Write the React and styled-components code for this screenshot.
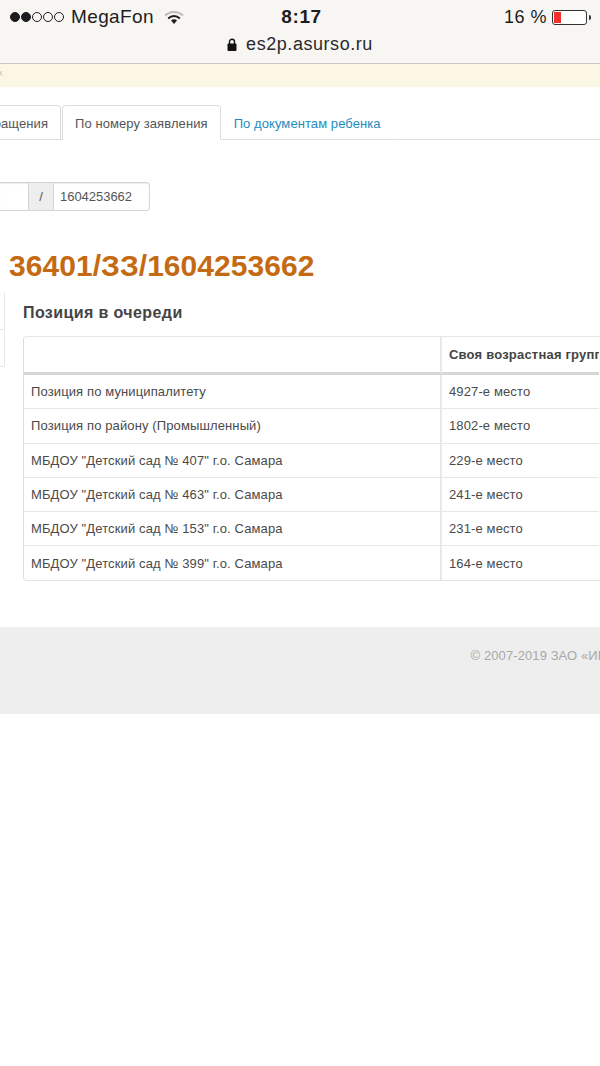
import React from "react";
import styled, { createGlobalStyle } from "styled-components";

const GlobalStyle = createGlobalStyle`
  html, body {
    margin: 0;
    padding: 0;
    background: #fff;
  }
  body {
    width: 600px;
    height: 1066px;
    overflow: hidden;
    font-family: "Liberation Sans", Arial, sans-serif;
    color: #444;
  }
`;

const Screen = styled.div`
  width: 600px;
  height: 1066px;
  overflow: hidden;
  background: #fff;
`;

const BrowserBar = styled.header`
  height: 64px;
  box-sizing: border-box;
  padding: 5px 0 0;
  background: #f7f6f3;
  border-bottom: 1px solid #c6c6c4;
  color: #1d1d1f;
`;

const StatusRow = styled.div`
  display: grid;
  grid-template-columns: 1fr auto 1fr;
  align-items: center;
  height: 24px;
  padding: 0 9px 0 10px;
`;

const Carrier = styled.div`
  display: flex;
  align-items: center;
  font-size: 19px;
  letter-spacing: 0.37px;
`;

const Signal = styled.span`
  display: flex;
  gap: 1px;
  margin-right: 7px;
`;

const Dot = styled.i`
  width: 10px;
  height: 10px;
  box-sizing: border-box;
  border-radius: 50%;
  border: 1px solid #1d1d1f;
  background: ${(p) => (p.$on ? "#1d1d1f" : "transparent")};
`;

const Wifi = styled.svg`
  width: 20px;
  height: 15px;
  margin-left: 10px;
`;

const Clock = styled.div`
  margin-left: 2px;
  font-size: 19px;
  font-weight: 700;
  letter-spacing: 0.6px;
`;

const Battery = styled.div`
  display: flex;
  align-items: center;
  justify-content: flex-end;
  font-size: 18px;
  letter-spacing: 0.5px;
`;

const BatteryBody = styled.span`
  width: 35px;
  height: 15px;
  box-sizing: border-box;
  margin-left: 5px;
  padding: 1px;
  border: 1px solid #333;
  border-radius: 3px;
  background: #fff;
`;

const BatteryFill = styled.span`
  display: block;
  width: 7px;
  height: 100%;
  background: #f4302c;
`;

const BatteryTip = styled.span`
  width: 2px;
  height: 5px;
  margin-left: 2px;
  background: #333;
  border-radius: 0 2px 2px 0;
`;

const UrlRow = styled.div`
  display: flex;
  align-items: center;
  justify-content: center;
  height: 24px;
  margin-top: 3px;
  font-size: 18px;
  letter-spacing: 0.55px;
  color: #2a2a2c;
`;

const Lock = styled.svg`
  width: 10px;
  height: 13px;
  margin-right: 9px;
`;

const Alert = styled.div`
  height: 23px;
  background: #fcf6e5;
  color: #cdbb98;
  font-size: 10px;
  line-height: 20px;
  overflow: hidden;
`;

const AlertText = styled.span`
  display: block;
  margin-left: -3px;
`;

const TabStrip = styled.nav`
  display: flex;
  align-items: flex-end;
  height: 53px;
  box-sizing: border-box;
  border-bottom: 1px solid #ddd;
`;

const Tab = styled.a`
  display: block;
  box-sizing: border-box;
  height: 35px;
  margin-bottom: -1px;
  padding: 9px 12px 0;
  font-size: 13px;
  line-height: 18px;
  letter-spacing: 0.08px;
  white-space: nowrap;
  color: ${(p) => (p.$link ? "#1d8cc0" : "#555")};
  background: #fff;
  border: 1px solid ${(p) => (p.$link ? "transparent" : "#ddd")};
  border-bottom-color: ${(p) => (p.$link ? "#ddd" : "#fff")};
  border-radius: 4px 4px 0 0;
`;

const ClippedTab = styled(Tab)`
  margin-left: -13px;
  margin-right: 1px;
  padding-left: 0;
  padding-right: 12px;
  width: 74px;
  text-align: right;
  border-bottom-color: #ddd;
  border-left: 0;
`;

const SearchGroup = styled.div`
  display: flex;
  width: 150px;
  height: 29px;
  box-sizing: border-box;
  margin-top: 42px;
  border: 1px solid #d4d4d4;
  border-left: 0;
  border-radius: 0 4px 4px 0;
  box-shadow: inset 0 1px 1px rgba(0, 0, 0, 0.08);
  font-size: 13px;
  line-height: 28px;
  color: #555;
`;

const SearchBlank = styled.span`
  width: 28px;
  border-right: 1px solid #d4d4d4;
`;

const SearchSlash = styled.span`
  width: 24px;
  text-align: center;
  background: #eee;
  border-right: 1px solid #d4d4d4;
`;

const SearchValue = styled.span`
  padding-left: 6px;
  font-size: 13px;
  letter-spacing: -0.03px;
`;

const Title = styled.h1`
  margin: 37px 0 0 9px;
  font-size: 30px;
  line-height: 36px;
  font-weight: 700;
  letter-spacing: 0.05px;
  color: #c46a12;
`;

const Columns = styled.div`
  display: flex;
  margin-top: 9px;
`;

const SideNav = styled.aside`
  width: 5px;
  flex: none;
`;

const SideItem = styled.div`
  height: 37px;
  box-sizing: border-box;
  border-right: 1px solid #e8e8e8;
  border-bottom: 1px solid #e8e8e8;
`;

const Main = styled.section`
  margin-left: 18px;
  flex: 1;
  min-width: 0;
`;

const Heading = styled.h2`
  margin: 10px 0 0;
  font-size: 16px;
  line-height: 19px;
  font-weight: 700;
  letter-spacing: 0.4px;
  color: #444;
`;

const Table = styled.table`
  display: block;
  width: 577px;
  margin-top: 14px;
  border-collapse: separate;
  border-spacing: 0;
  font-size: 13px;
  letter-spacing: 0.12px;
  color: #4a4a4a;
  border-top: 1px solid #e6e6e6;
  border-left: 1px solid #ddd;
  border-bottom: 1px solid #e4e4e4;
  border-radius: 4px 0 0 4px;
`;

const HeadCell = styled.th`
  height: 35px;
  padding: 0 0 0 7px;
  text-align: left;
  font-size: 13px;
  font-weight: 700;
  letter-spacing: 0.2px;
  color: #444;
  white-space: nowrap;
  border-bottom: 3px solid #d6d6d6;
  border-right: ${(p) => (p.$first ? "2px solid #e8e8e8" : "0")};
  min-width: ${(p) => (p.$first ? "409px" : "150px")};
  max-width: ${(p) => (p.$first ? "409px" : "150px")};
  overflow: hidden;
  box-sizing: content-box;
`;

const Cell = styled.td`
  height: 33.3px;
  padding: 0 0 0 7px;
  white-space: nowrap;
  border-top: ${(p) => (p.$top ? "0" : "1px solid #e6e6e6")};
  border-right: ${(p) => (p.$first ? "2px solid #e8e8e8" : "0")};
`;

const Footer = styled.footer`
  height: 87px;
  box-sizing: border-box;
  margin-top: 46px;
  padding: 21px 0 0 470.5px;
  background: #eeeeee;
  font-size: 13px;
  line-height: 15px;
  letter-spacing: 0.1px;
  color: #a8a8a8;
  white-space: nowrap;
  overflow: hidden;
`;

const rows = [
  ["Позиция по муниципалитету", "4927-е место"],
  ["Позиция по району (Промышленный)", "1802-е место"],
  ['МБДОУ "Детский сад № 407" г.о. Самара', "229-е место"],
  ['МБДОУ "Детский сад № 463" г.о. Самара', "241-е место"],
  ['МБДОУ "Детский сад № 153" г.о. Самара', "231-е место"],
  ['МБДОУ "Детский сад № 399" г.о. Самара', "164-е место"],
];

export default function App() {
  return (
    <Screen>
      <GlobalStyle />
      <BrowserBar>
        <StatusRow>
          <Carrier>
            <Signal>
              <Dot $on />
              <Dot $on />
              <Dot />
              <Dot />
              <Dot />
            </Signal>
            MegaFon
            <Wifi viewBox="0 0 20 15">
              <path d="M1 5.5a13 13 0 0 1 18 0" fill="none" stroke="#bdbdbd" strokeWidth="2" />
              <path d="M4.2 8.4a8.5 8.5 0 0 1 11.6 0" fill="none" stroke="#1d1d1f" strokeWidth="2" />
              <path d="M10 14l-3-3.4a4.4 4.4 0 0 1 6 0z" fill="#1d1d1f" />
            </Wifi>
          </Carrier>
          <Clock>8:17</Clock>
          <Battery>
            16 %
            <BatteryBody>
              <BatteryFill />
            </BatteryBody>
            <BatteryTip />
          </Battery>
        </StatusRow>
        <UrlRow>
          <Lock viewBox="0 0 10 13">
            <path d="M2.5 6V3.8a2.5 2.5 0 0 1 5 0V6" fill="none" stroke="#111" strokeWidth="1.4" />
            <rect x="0.5" y="5.5" width="9" height="7.5" rx="1" fill="#111" />
          </Lock>
          es2p.asurso.ru
        </UrlRow>
      </BrowserBar>
      <Alert>
        <AlertText>×</AlertText>
      </Alert>
      <TabStrip>
        <ClippedTab>ращения</ClippedTab>
        <Tab>По номеру заявления</Tab>
        <Tab $link>По документам ребенка</Tab>
      </TabStrip>
      <SearchGroup>
        <SearchBlank />
        <SearchSlash>/</SearchSlash>
        <SearchValue>1604253662</SearchValue>
      </SearchGroup>
      <Title>36401/ЗЗ/1604253662</Title>
      <Columns>
        <SideNav>
          <SideItem />
          <SideItem />
        </SideNav>
        <Main>
          <Heading>Позиция в очереди</Heading>
          <Table>
            <thead>
              <tr>
                <HeadCell $first />
                <HeadCell>Своя возрастная группа</HeadCell>
              </tr>
            </thead>
            <tbody>
              {rows.map(([name, place], i) => (
                <tr key={name}>
                  <Cell $first $top={i === 0}>
                    {name}
                  </Cell>
                  <Cell $top={i === 0}>{place}</Cell>
                </tr>
              ))}
            </tbody>
          </Table>
        </Main>
      </Columns>
      <Footer>© 2007-2019 ЗАО «ИРТех»</Footer>
    </Screen>
  );
}
